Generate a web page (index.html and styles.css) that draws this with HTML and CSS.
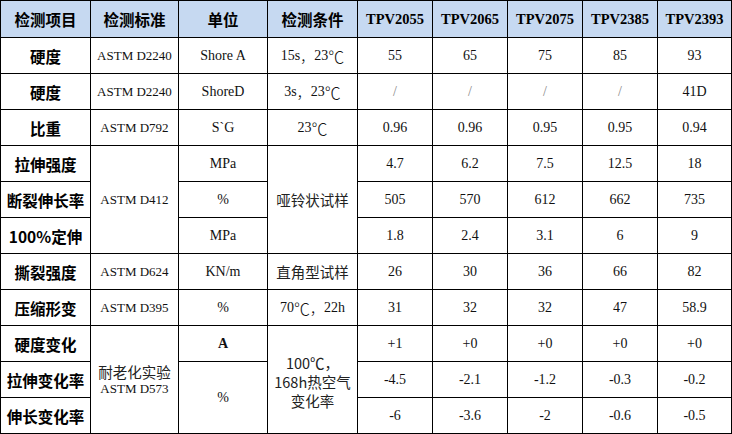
FILE: index.html
```html
<!DOCTYPE html>
<html lang="zh">
<head>
<meta charset="utf-8">
<title>TPV 检测数据</title>
<link rel="stylesheet" href="styles.css">
</head>
<body>
<div class="sheet">
  <div class="c hd cn">检测项目</div>
  <div class="c hd cn">检测标准</div>
  <div class="c hd cn">单位</div>
  <div class="c hd cn">检测条件</div>
  <div class="c hd en">TPV2055</div>
  <div class="c hd en">TPV2065</div>
  <div class="c hd en">TPV2075</div>
  <div class="c hd en">TPV2385</div>
  <div class="c hd en">TPV2393</div>

  <div class="c item">硬度</div>
  <div class="c std">ASTM D2240</div>
  <div class="c val">Shore A</div>
  <div class="c val">15s<span class="cjk">，</span>23<span class="cjk deg">℃</span></div>
  <div class="c val">55</div>
  <div class="c val">65</div>
  <div class="c val">75</div>
  <div class="c val">85</div>
  <div class="c val">93</div>

  <div class="c item">硬度</div>
  <div class="c std">ASTM D2240</div>
  <div class="c val">ShoreD</div>
  <div class="c val">3s<span class="cjk">，</span>23<span class="cjk deg">℃</span></div>
  <div class="c val na">/</div>
  <div class="c val na">/</div>
  <div class="c val na">/</div>
  <div class="c val na">/</div>
  <div class="c val">41D</div>

  <div class="c item">比重</div>
  <div class="c std">ASTM D792</div>
  <div class="c val">S`G</div>
  <div class="c val">23<span class="cjk deg">℃</span></div>
  <div class="c val">0.96</div>
  <div class="c val">0.96</div>
  <div class="c val">0.95</div>
  <div class="c val">0.95</div>
  <div class="c val">0.94</div>

  <div class="c item">拉伸强度</div>
  <div class="c std r3">ASTM D412</div>
  <div class="c val">MPa</div>
  <div class="c cond r3">哑铃状试样</div>
  <div class="c val">4.7</div>
  <div class="c val">6.2</div>
  <div class="c val">7.5</div>
  <div class="c val">12.5</div>
  <div class="c val">18</div>

  <div class="c item">断裂伸长率</div>
  <div class="c val">%</div>
  <div class="c val">505</div>
  <div class="c val">570</div>
  <div class="c val">612</div>
  <div class="c val">662</div>
  <div class="c val">735</div>

  <div class="c item">100%定伸</div>
  <div class="c val">MPa</div>
  <div class="c val">1.8</div>
  <div class="c val">2.4</div>
  <div class="c val">3.1</div>
  <div class="c val">6</div>
  <div class="c val">9</div>

  <div class="c item">撕裂强度</div>
  <div class="c std">ASTM D624</div>
  <div class="c val">KN/m</div>
  <div class="c cond">直角型试样</div>
  <div class="c val">26</div>
  <div class="c val">30</div>
  <div class="c val">36</div>
  <div class="c val">66</div>
  <div class="c val">82</div>

  <div class="c item">压缩形变</div>
  <div class="c std">ASTM D395</div>
  <div class="c val">%</div>
  <div class="c val">70<span class="cjk deg">℃</span><span class="cjk">，</span>22h</div>
  <div class="c val">31</div>
  <div class="c val">32</div>
  <div class="c val">32</div>
  <div class="c val">47</div>
  <div class="c val">58.9</div>

  <div class="c item">硬度变化</div>
  <div class="c std r3 stack"><span class="cond-cn">耐老化实验</span><span>ASTM D573</span></div>
  <div class="c val bold">A</div>
  <div class="c cond r3 stack lines"><span>100℃，</span><span>168h热空气</span><span>变化率</span></div>
  <div class="c val">+1</div>
  <div class="c val">+0</div>
  <div class="c val">+0</div>
  <div class="c val">+0</div>
  <div class="c val">+0</div>

  <div class="c item">拉伸变化率</div>
  <div class="c val r2">%</div>
  <div class="c val">-4.5</div>
  <div class="c val">-2.1</div>
  <div class="c val">-1.2</div>
  <div class="c val">-0.3</div>
  <div class="c val">-0.2</div>

  <div class="c item">伸长变化率</div>
  <div class="c val">-6</div>
  <div class="c val">-3.6</div>
  <div class="c val">-2</div>
  <div class="c val">-0.6</div>
  <div class="c val">-0.5</div>
</div>
</body>
</html>
```

FILE: styles.css
```css
html, body {
  margin: 0;
  padding: 0;
  background: #ffffff;
}

.sheet {
  display: grid;
  grid-template-columns: 89px 87px 88px 89px 74px 74px 74px 74px 73px;
  grid-template-rows: 36px repeat(11, 35px);
  gap: 1px;
  padding: 1px;
  width: 732px;
  box-sizing: border-box;
  background: #000000;
}

.c {
  background: #ffffff;
  display: flex;
  align-items: center;
  justify-content: center;
  text-align: center;
  color: #111111;
  font-family: "Liberation Serif", "Noto Sans CJK SC", serif;
  font-size: 14px;
  white-space: nowrap;
}

.cjk {
  font-family: "Noto Sans CJK SC", sans-serif;
  font-weight: 300;
}

.deg {
  font-size: 16px;
}

.hd {
  background: #c6d9f1;
  color: #000000;
  font-weight: 700;
}

.hd.cn {
  font-family: "Noto Sans CJK SC", sans-serif;
  font-size: 15.5px;
}

.hd.en {
  font-family: "Liberation Serif", serif;
  font-size: 14.5px;
}

.item {
  font-family: "Noto Sans CJK SC", sans-serif;
  font-weight: 700;
  font-size: 15.5px;
  color: #000000;
}

.std {
  font-size: 13px;
}

.cond {
  font-family: "Noto Sans CJK SC", sans-serif;
  font-size: 14.5px;
  color: #222222;
}

.na {
  color: #888888;
}

.bold {
  font-weight: 700;
}

.r3 {
  grid-row: span 3;
}

.r2 {
  grid-row: span 2;
}

.stack {
  flex-direction: column;
  line-height: 17px;
}

.cond-cn {
  font-family: "Noto Sans CJK SC", sans-serif;
  font-size: 14.5px;
  color: #222222;
}

.lines {
  line-height: 19px;
  padding-top: 3px;
  box-sizing: border-box;
}
```
